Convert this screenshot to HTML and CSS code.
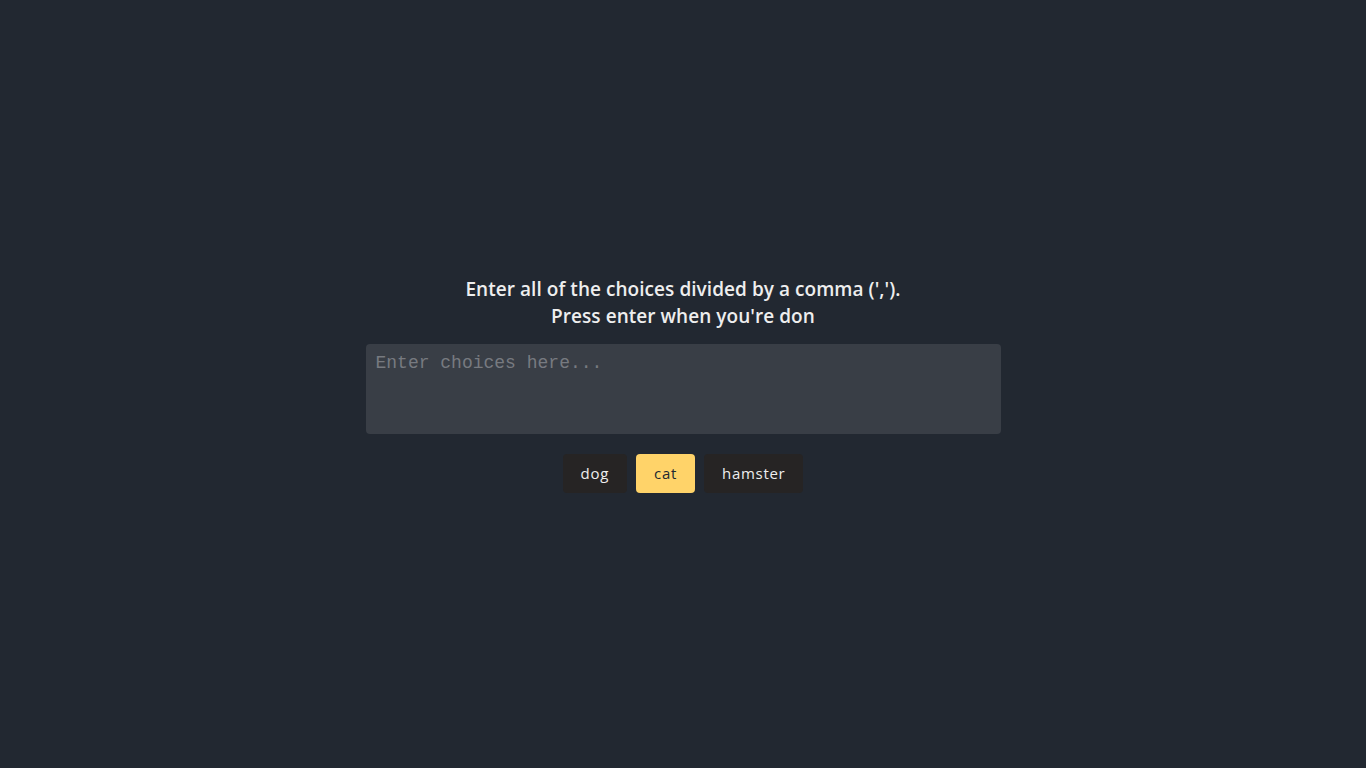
FILE: index.html
```html
<!DOCTYPE html>
<html lang="en">
<head>
<meta charset="utf-8">
<title>Randomizer</title>
<link rel="stylesheet" href="styles.css">
</head>
<body>
<main class="container">
  <h3 class="title">Enter all of the choices divided by a comma (',').<br>Press enter when you're don</h3>
  <textarea class="choices" placeholder="Enter choices here..."></textarea>
  <div class="tags">
    <span class="tag">dog</span>
    <span class="tag highlight">cat</span>
    <span class="tag">hamster</span>
  </div>
</main>
</body>
</html>
```

FILE: styles.css
```css
* { box-sizing: border-box; }
html, body { margin: 0; padding: 0; }
body {
  background: #222831;
  color: #eeeeee;
  font-family: "Open Sans", "Liberation Sans", sans-serif;
  height: 100vh;
  overflow: hidden;
}
.container {
  height: 100vh;
  display: flex;
  flex-direction: column;
  align-items: center;
  justify-content: center;
}
.title {
  margin: 0 0 14px;
  font-size: 19px;
  font-weight: 600;
  line-height: 27px;
  text-align: center;
  letter-spacing: 0.05px;
}
.choices {
  display: block;
  width: 635px;
  height: 90px;
  background: #393e46;
  border: none;
  border-radius: 4px;
  padding: 9px 10px 8px;
  color: #eeeeee;
  font-family: "Liberation Mono", "DejaVu Sans Mono", monospace;
  font-size: 18px;
  line-height: 1.2;
  resize: none;
  outline: none;
}
.choices::placeholder { color: #777a80; }
.tags {
  display: flex;
  gap: 9px;
  margin-top: 20px;
}
.tag {
  display: inline-block;
  background: #262424;
  color: #eeeeee;
  font-size: 15px;
  line-height: 23px;
  padding: 8px 18px;
  letter-spacing: 0.7px;
  border-radius: 4px;
}
.tag.highlight {
  background: #ffd369;
  color: #222831;
}
```
